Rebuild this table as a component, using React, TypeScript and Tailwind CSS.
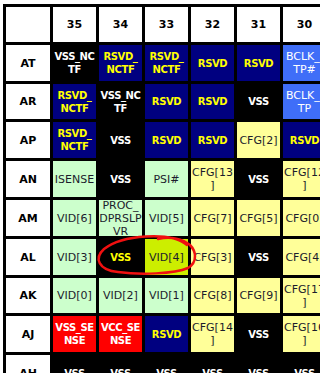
type Kind = "blk" | "blkY" | "navy" | "blue" | "grn" | "yel" | "red" | "lime";

type Cell = { t: string[]; k: Kind };

const kindClass: Record<Kind, string> = {
  blk: "bg-black text-white font-bold text-[10px] tracking-[-0.4px]",
  blkY: "bg-black text-[#ffff00] font-bold text-[10px] tracking-[-0.4px]",
  navy: "bg-[#000080] text-[#ffff00] font-bold text-[10px] tracking-[-0.4px]",
  blue: "bg-[#3f6ef8] text-white",
  grn: "bg-[#ccffcc] text-[#1c1c2c]",
  yel: "bg-[#ffff99] text-[#1c1c2c]",
  red: "bg-[#ff0000] text-white font-bold text-[10px] tracking-[-0.4px]",
  lime: "bg-[#ccee00] text-[#1c1c2c]",
};

const c = (k: Kind, ...t: string[]): Cell => ({ t, k });

const cols = ["35", "34", "33", "32", "31", "30"];

const rows: { name: string; cells: Cell[] }[] = [
  {
    name: "AT",
    cells: [
      c("blk", "VSS_NC", "TF"),
      c("navy", "RSVD_", "NCTF"),
      c("navy", "RSVD_", "NCTF"),
      c("navy", "RSVD"),
      c("navy", "RSVD"),
      c("blue", "BCLK_I", "TP#"),
    ],
  },
  {
    name: "AR",
    cells: [
      c("navy", "RSVD_", "NCTF"),
      c("blk", "VSS_NC", "TF"),
      c("navy", "RSVD"),
      c("navy", "RSVD"),
      c("blk", "VSS"),
      c("blue", "BCLK_I", "TP"),
    ],
  },
  {
    name: "AP",
    cells: [
      c("navy", "RSVD_", "NCTF"),
      c("blk", "VSS"),
      c("navy", "RSVD"),
      c("navy", "RSVD"),
      c("yel", "CFG[2]"),
      c("navy", "RSVD"),
    ],
  },
  {
    name: "AN",
    cells: [
      c("grn", "ISENSE"),
      c("blk", "VSS"),
      c("grn", "PSI#"),
      c("yel", "CFG[13", "]"),
      c("blk", "VSS"),
      c("yel", "CFG[12", "]"),
    ],
  },
  {
    name: "AM",
    cells: [
      c("grn", "VID[6]"),
      c("grn", "PROC_", "DPRSLP", "VR"),
      c("grn", "VID[5]"),
      c("yel", "CFG[7]"),
      c("yel", "CFG[5]"),
      c("yel", "CFG[0]"),
    ],
  },
  {
    name: "AL",
    cells: [
      c("grn", "VID[3]"),
      c("blkY", "VSS"),
      c("lime", "VID[4]"),
      c("yel", "CFG[3]"),
      c("blk", "VSS"),
      c("yel", "CFG[4]"),
    ],
  },
  {
    name: "AK",
    cells: [
      c("grn", "VID[0]"),
      c("grn", "VID[2]"),
      c("grn", "VID[1]"),
      c("yel", "CFG[8]"),
      c("yel", "CFG[9]"),
      c("yel", "CFG[17", "]"),
    ],
  },
  {
    name: "AJ",
    cells: [
      c("red", "VSS_SE", "NSE"),
      c("red", "VCC_SE", "NSE"),
      c("navy", "RSVD"),
      c("yel", "CFG[14", "]"),
      c("blk", "VSS"),
      c("yel", "CFG[16", "]"),
    ],
  },
  {
    name: "AH",
    cells: [
      c("blk", "VSS"),
      c("blk", "VSS"),
      c("blk", "VSS"),
      c("blk", "VSS"),
      c("blk", "VSS"),
      c("blk", "VSS"),
    ],
  },
];

function Lines({ t }: { t: string[] }) {
  return (
    <>
      {t.map((line, i) => (
        <span key={i} className="block whitespace-nowrap">
          {line}
        </span>
      ))}
    </>
  );
}

export default function App() {
  return (
    <div
      className="relative w-[320px] h-[373px] overflow-hidden bg-white text-[11px] leading-[13px]"
      style={{ fontFamily: '"DejaVu Sans", Verdana, sans-serif' }}
    >
      <div className="absolute left-[3px] top-[4px] grid grid-cols-[44px_repeat(6,43px)] grid-rows-[35px_36px_35px_36px_36px_36px_36px_35px_36px_36px] gap-[3px] p-[3px] bg-black">
        <div className="bg-white" />
        {cols.map((n) => (
          <div
            key={n}
            className="bg-white flex items-center justify-center font-bold text-black"
          >
            {n}
          </div>
        ))}
        {rows.map((r) => (
          <div key={r.name} className="contents">
            <div className="bg-white flex items-center justify-center font-bold text-black">
              {r.name}
            </div>
            {r.cells.map((cell, i) => (
              <div
                key={i}
                className={`flex flex-col items-center justify-center text-center overflow-hidden ${kindClass[cell.k]}`}
              >
                <Lines t={cell.t} />
              </div>
            ))}
          </div>
        ))}
      </div>
      <svg
        className="absolute left-0 top-0 pointer-events-none"
        width="320"
        height="373"
        viewBox="0 0 320 373"
      >
        <path
          d="M187 245 C170 231 122 235 104 249 C94 258 98 270 118 272 C140 275 174 274 188 268 C198 262 196 251 190 245 C183 239 171 236 158 239"
          fill="none"
          stroke="#f01010"
          strokeWidth="2.5"
          strokeLinecap="round"
        />
      </svg>
    </div>
  );
}
